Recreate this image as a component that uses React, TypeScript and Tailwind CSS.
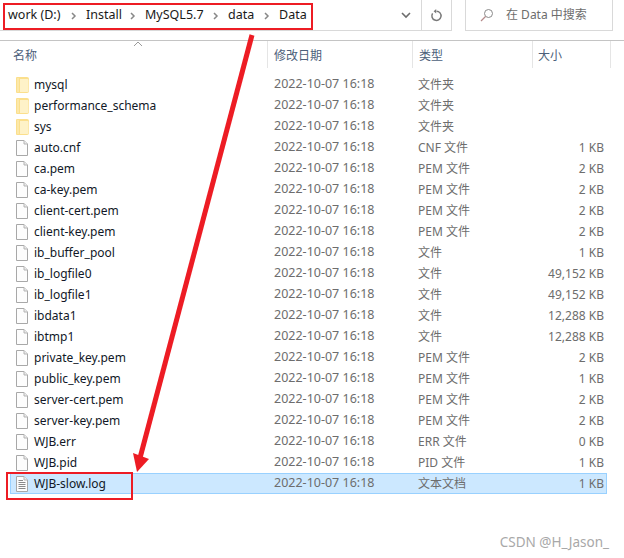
const FONT = "font-['Noto_Sans','Noto_Sans_CJK_SC',sans-serif]";

type Row = { name: string; type: string; size: string; icon: "folder" | "file" | "text"; selected?: boolean };

const ROWS: Row[] = [
  { name: "mysql", type: "文件夹", size: "", icon: "folder" },
  { name: "performance_schema", type: "文件夹", size: "", icon: "folder" },
  { name: "sys", type: "文件夹", size: "", icon: "folder" },
  { name: "auto.cnf", type: "CNF 文件", size: "1 KB", icon: "file" },
  { name: "ca.pem", type: "PEM 文件", size: "2 KB", icon: "file" },
  { name: "ca-key.pem", type: "PEM 文件", size: "2 KB", icon: "file" },
  { name: "client-cert.pem", type: "PEM 文件", size: "2 KB", icon: "file" },
  { name: "client-key.pem", type: "PEM 文件", size: "2 KB", icon: "file" },
  { name: "ib_buffer_pool", type: "文件", size: "1 KB", icon: "file" },
  { name: "ib_logfile0", type: "文件", size: "49,152 KB", icon: "file" },
  { name: "ib_logfile1", type: "文件", size: "49,152 KB", icon: "file" },
  { name: "ibdata1", type: "文件", size: "12,288 KB", icon: "file" },
  { name: "ibtmp1", type: "文件", size: "12,288 KB", icon: "file" },
  { name: "private_key.pem", type: "PEM 文件", size: "2 KB", icon: "file" },
  { name: "public_key.pem", type: "PEM 文件", size: "1 KB", icon: "file" },
  { name: "server-cert.pem", type: "PEM 文件", size: "2 KB", icon: "file" },
  { name: "server-key.pem", type: "PEM 文件", size: "2 KB", icon: "file" },
  { name: "WJB.err", type: "ERR 文件", size: "0 KB", icon: "file" },
  { name: "WJB.pid", type: "PID 文件", size: "1 KB", icon: "file" },
  { name: "WJB-slow.log", type: "文本文档", size: "1 KB", icon: "text", selected: true },
];

const CRUMBS = [
  { label: "work (D:)", width: "w-[53px]" },
  { label: "Install", width: "w-[34px]" },
  { label: "MySQL5.7", width: "w-[58px]" },
  { label: "data", width: "w-[26px]" },
  { label: "Data", width: "w-[27px]" },
];

function FileIcon({ kind }: { kind: Row["icon"] }) {
  if (kind === "folder") {
    return (
      <svg width="13" height="16" viewBox="0 0 13 16">
        <path d="M0 1 Q0 0 1 0 H11 Q13 0 13 2 V14 Q13 16 11 16 H1 Q0 16 0 15 Z" fill="#fbdf8c" />
        <path d="M4 2 H11.5 Q12.5 2 12.5 3 V14 Q12.5 15 11.5 15 H4 Z" fill="#fef2c8" />
        <path d="M1 1 H3 V15 H1 Z" fill="#fce8a8" />
      </svg>
    );
  }
  return (
    <svg width="12" height="16" viewBox="0 0 12 16">
      <path d="M0.5 0.5 H8 L11.5 4 V15.5 H0.5 Z" fill="#fdfdfd" stroke="#a8a8a8" />
      <path d="M8 0.5 V4 H11.5" fill="#ececec" stroke="#b4b4b4" />
      {kind === "text" && (
        <path d="M2.5 4.5 H7 M2.5 6.5 H9.5 M2.5 8.5 H9.5 M2.5 10.5 H9.5 M2.5 12.5 H9.5" stroke="#8a8a8a" />
      )}
    </svg>
  );
}

function Toolbar() {
  return (
    <div className="flex h-[31px] items-stretch">
      <div className="flex w-[421px] items-center justify-between border-b border-[#d9d9d9] pl-2 pr-[10px]">
        <div className="flex items-center gap-[25px] text-[12.5px] text-[#1a1a1a]">
          {CRUMBS.map((crumb, i) => (
            <div key={crumb.label} className={`relative whitespace-nowrap ${crumb.width}`}>
              {i > 0 && (
                <svg width="6" height="10" viewBox="0 0 6 10" className="absolute left-[-15px] top-[5px]">
                  <path d="M1 2 L4 5 L1 8" fill="none" stroke="#888" strokeWidth="1.5" />
                </svg>
              )}
              <span>{crumb.label}</span>
            </div>
          ))}
        </div>
        <svg width="10" height="7" viewBox="0 0 10 7">
          <path d="M1 1 L5 5 L9 1" fill="none" stroke="#6d6d6d" strokeWidth="1.6" />
        </svg>
      </div>
      <div className="flex w-[31px] items-center justify-center border-x border-b border-[#d9d9d9]">
        <svg width="13" height="13" viewBox="0 0 13 13">
          <path d="M6.5 2.2 A4.6 4.6 0 1 1 2.6 4.3" fill="none" stroke="#7a7a7a" strokeWidth="1.5" />
          <path d="M6.2 0 V4.6 L3.6 2.3 Z" fill="#7a7a7a" />
        </svg>
      </div>
      <div className="ml-[13px] flex w-[148px] items-center border border-t-0 border-[#d9d9d9] pl-[14px] text-[12px] text-[#6d6d6d]">
        <svg width="14" height="14" viewBox="0 0 14 14">
          <circle cx="8.5" cy="5.5" r="4" fill="none" stroke="#8a8a8a" />
          <path d="M5.5 8.5 L1 13" stroke="#b58a8a" strokeWidth="1.2" />
        </svg>
        <span className="ml-[12px] whitespace-nowrap">在 Data 中搜索</span>
      </div>
    </div>
  );
}

function Header() {
  return (
    <div className="mt-[9px] border-t border-[#c4c4c4]">
      <div className="relative flex h-[27px] pl-[13px] text-[12px] text-[#4c607a]">
        <svg width="10" height="6" viewBox="0 0 10 6" className="absolute left-[133px] top-0">
          <path d="M1 5 L5 1 L9 5" fill="none" stroke="#9a9a9a" />
        </svg>
        <div className="flex h-full w-[254px] items-center pt-[2px]">名称</div>
        <div className="flex h-full w-[145px] items-center border-l border-[#e5e5e5] pl-[6px] pt-[2px]">修改日期</div>
        <div className="flex h-full w-[120px] items-center border-l border-[#e5e5e5] pl-[6px] pt-[2px]">类型</div>
        <div className="flex h-full w-[79px] items-center border-x border-[#e5e5e5] pl-[5px] pt-[2px]">大小</div>
      </div>
    </div>
  );
}

function FileRow({ row }: { row: Row }) {
  return (
    <div
      className={`ml-[10px] flex h-[21px] w-[597px] items-center border text-[12px] ${
        row.selected ? "border-[#99d1ff] bg-[#cce8ff]" : "border-transparent"
      }`}
    >
      <div className="w-[5px]" />
      <div className="flex w-[17px] items-center">
        <FileIcon kind={row.icon} />
      </div>
      <div className="ml-[1px] w-[240px] text-[#111827]">{row.name}</div>
      <div className="w-[144px] text-[12.5px] text-[#6d6d6d]">2022-10-07 16:18</div>
      <div className="w-[90px] text-[#6d6d6d]">{row.type}</div>
      <div className="w-[96px] text-right text-[#6d6d6d]">{row.size}</div>
    </div>
  );
}

export default function App() {
  return (
    <div className={`relative h-[558px] w-[624px] overflow-hidden bg-white ${FONT}`}>
      <Toolbar />
      <Header />
      <div className="mt-[6px]">
        {ROWS.map((row) => (
          <FileRow key={row.name} row={row} />
        ))}
      </div>

      {/* annotations drawn over the screenshot */}
      <div className="absolute left-[3px] top-[3px] h-[27px] w-[310px] border-2 border-[#ed1c24]" />
      <div className="absolute left-[6px] top-[472px] h-[28px] w-[127px] border-2 border-[#ed1c24]" />
      <svg width="624" height="558" className="pointer-events-none absolute left-0 top-0">
        <path d="M252 35 L140 458" stroke="#ed1c24" strokeWidth="5" fill="none" />
        <path d="M137 472 L133 453 L149 459 Z" fill="#ed1c24" />
      </svg>

      <div className="absolute bottom-[6px] right-[15px] text-[13.5px] text-[#a8a8a8]">CSDN @H_Jason_</div>
    </div>
  );
}
